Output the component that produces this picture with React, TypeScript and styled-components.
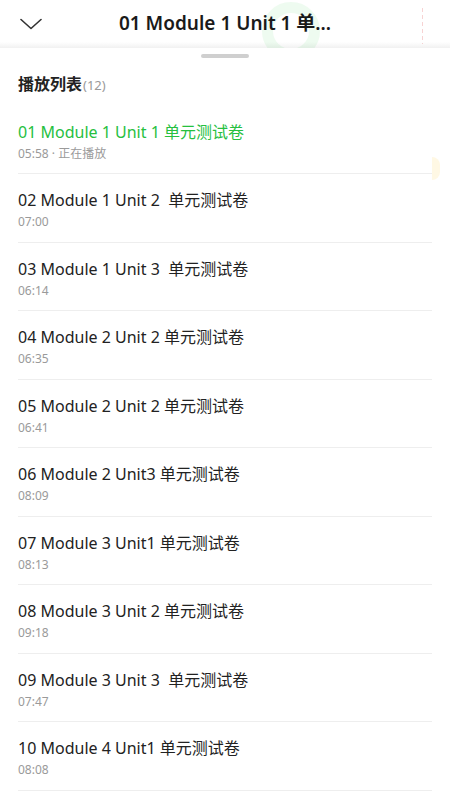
import React from "react";
import styled, { createGlobalStyle } from "styled-components";

const GlobalStyle = createGlobalStyle`
  html, body { margin: 0; padding: 0; background: #fff; }
  body {
    font-family: "Noto Sans", "Noto Sans CJK SC", sans-serif;
    -webkit-font-smoothing: antialiased;
  }
  * { box-sizing: border-box; }
`;

const Page = styled.div`
  position: relative;
  width: 450px;
  height: 800px;
  overflow: hidden;
  background: #fff;
  display: flex;
  flex-direction: column;
`;

const TopBar = styled.header`
  position: relative;
  height: 48px;
  flex: none;
  overflow: hidden;
  display: flex;
  align-items: center;
  justify-content: center;
  background: linear-gradient(to bottom, #fff 0, #fff 42px, #f1f1f1 48px);
`;

const BackButton = styled.button`
  position: absolute;
  left: 19px;
  top: 15px;
  width: 24px;
  height: 18px;
  padding: 0;
  border: 0;
  background: none;
  display: flex;
  align-items: center;
  justify-content: center;
`;

const Ring = styled.div`
  position: absolute;
  left: 262px;
  top: 2px;
  width: 58px;
  height: 58px;
  border-radius: 50%;
  border: 11px solid rgba(40, 200, 70, 0.08);
`;

const DottedLine = styled.div`
  position: absolute;
  left: 422px;
  top: 8px;
  width: 1px;
  height: 36px;
  background: repeating-linear-gradient(
    to bottom,
    rgba(230, 110, 110, 0.3) 0 4px,
    transparent 4px 7px
  );
`;

const Title = styled.h1`
  position: relative;
  margin: -2px 0 0;
  font-family: "Noto Sans", "Noto Sans CJK SC", sans-serif;
  font-size: 19px;
  font-weight: 600;
  color: #1a1a1a;
  line-height: 28px;
`;

const Sheet = styled.section`
  flex: 1;
  display: flex;
  flex-direction: column;
  background: #fff;
`;

const Handle = styled.div`
  align-self: center;
  width: 48px;
  height: 4px;
  border-radius: 2px;
  background: #cfcfcf;
  margin-top: 6px;
`;

const ListHeader = styled.div`
  margin: 13px 18px 0;
  height: 24px;
  display: flex;
  align-items: baseline;
`;

const ListTitle = styled.span`
  font-family: "Noto Sans CJK SC", sans-serif;
  font-size: 16px;
  font-weight: 700;
  color: #222;
  line-height: 24px;
`;

const Count = styled.span`
  font-size: 13px;
  color: #999;
  margin-left: 1px;
`;

const List = styled.ul`
  list-style: none;
  margin: 10.5px 0 0;
  padding: 0 18px;
`;

const Item = styled.li`
  position: relative;
  padding: 15px 0 10.5px;
  border-bottom: 1px solid #eeeeee;
  display: flex;
  flex-direction: column;
  gap: 2px;
`;

const ItemTitle = styled.div<{ $active?: boolean }>`
  font-size: 16px;
  line-height: 22px;
  color: ${(p) => (p.$active ? "#26c03f" : "#222")};
  white-space: pre;
`;

const ItemMeta = styled.div`
  font-size: 12px;
  line-height: 18px;
  color: #9a9a9a;
`;

const SideTab = styled.div`
  position: absolute;
  right: -8px;
  top: 51px;
  width: 8px;
  height: 23px;
  border-radius: 0 12px 12px 0;
  background: #fff8e4;
`;

const items = [
  { t: "01 Module 1 Unit 1 单元测试卷", d: "05:58 · 正在播放", active: true },
  { t: "02 Module 1 Unit 2  单元测试卷", d: "07:00" },
  { t: "03 Module 1 Unit 3  单元测试卷", d: "06:14" },
  { t: "04 Module 2 Unit 2 单元测试卷", d: "06:35" },
  { t: "05 Module 2 Unit 2 单元测试卷", d: "06:41" },
  { t: "06 Module 2 Unit3 单元测试卷", d: "08:09" },
  { t: "07 Module 3 Unit1 单元测试卷", d: "08:13" },
  { t: "08 Module 3 Unit 2 单元测试卷", d: "09:18" },
  { t: "09 Module 3 Unit 3  单元测试卷", d: "07:47" },
  { t: "10 Module 4 Unit1 单元测试卷", d: "08:08" },
];

export default function App() {
  return (
    <Page>
      <GlobalStyle />
      <TopBar>
        <BackButton aria-label="收起">
          <svg width="22" height="12" viewBox="0 0 22 12" fill="none">
            <path d="M1 1.5 L11 10.5 L21 1.5" stroke="#333" strokeWidth="1.6" strokeLinecap="round" strokeLinejoin="round" />
          </svg>
        </BackButton>
        <Ring />
        <DottedLine />
        <Title>01 Module 1 Unit 1 单...</Title>
      </TopBar>
      <Sheet>
        <Handle />
        <ListHeader>
          <ListTitle>播放列表</ListTitle>
          <Count>(12)</Count>
        </ListHeader>
        <List>
          {items.map((it, i) => (
            <Item key={i}>
              <ItemTitle $active={it.active}>{it.t}</ItemTitle>
              <ItemMeta>{it.d}</ItemMeta>
              {i === 0 && <SideTab />}
            </Item>
          ))}
        </List>
      </Sheet>
    </Page>
  );
}
